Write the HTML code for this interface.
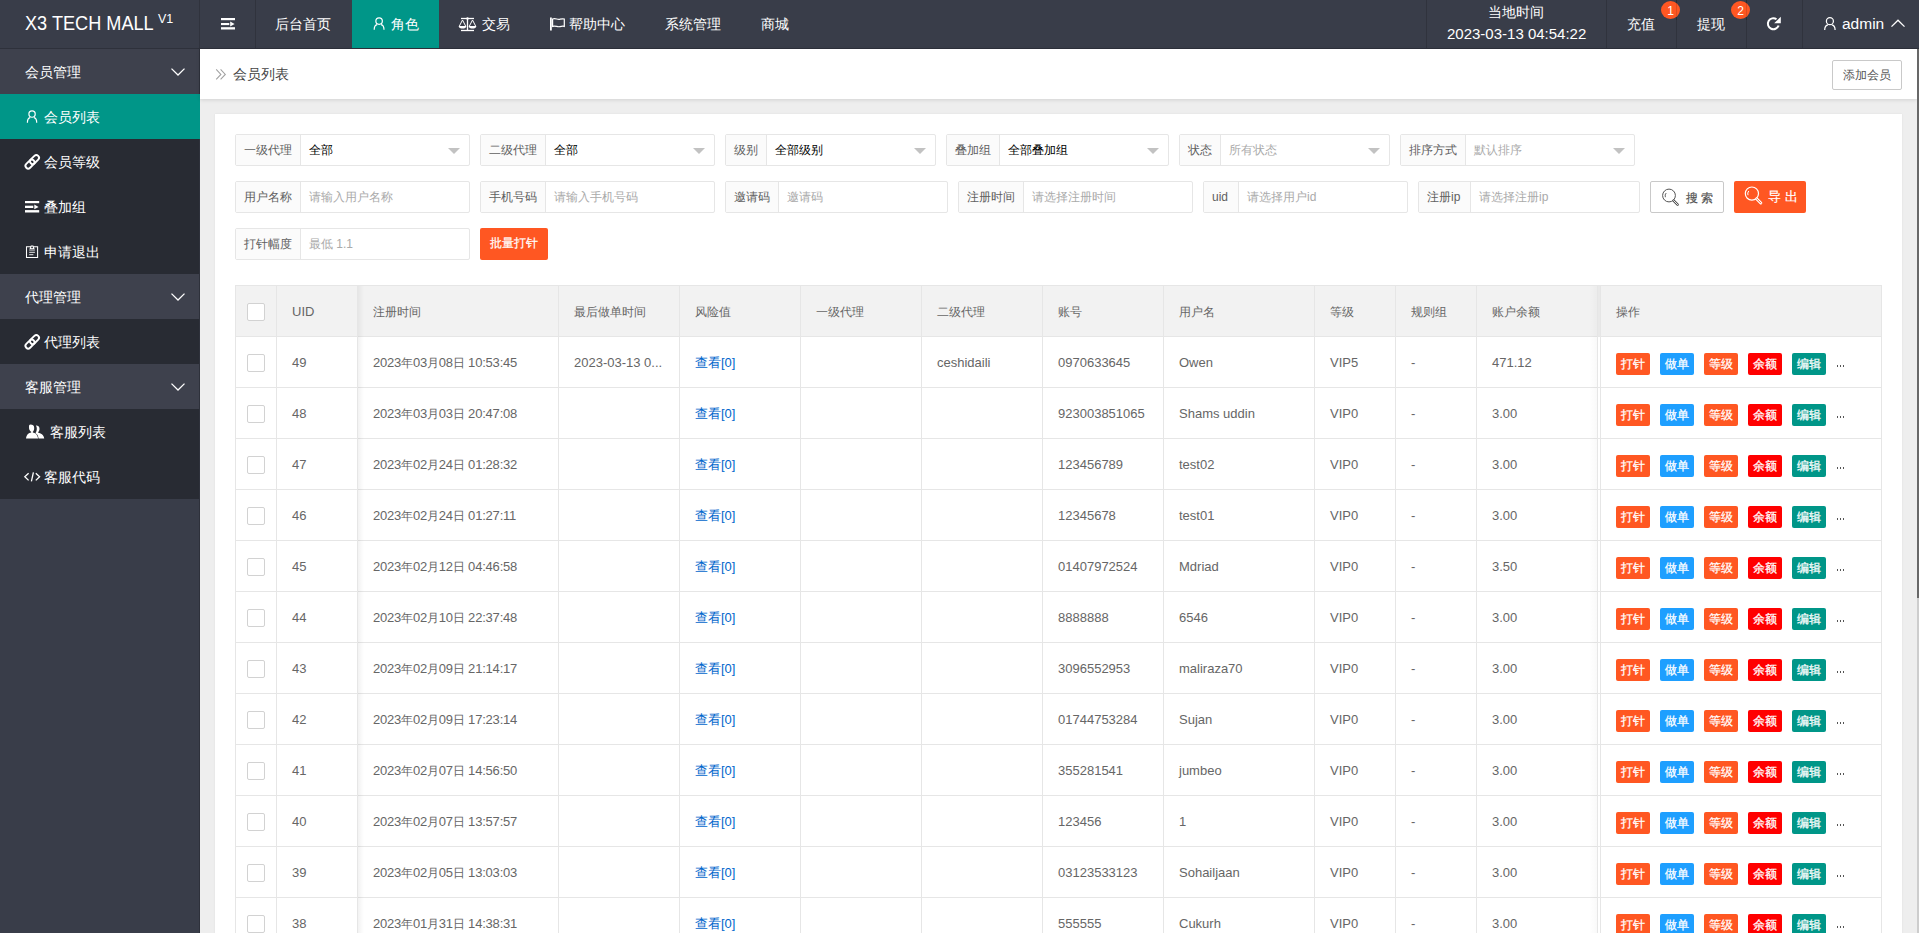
<!DOCTYPE html>
<html><head><meta charset="utf-8">
<style>
*{margin:0;padding:0;box-sizing:border-box}
html,body{width:1919px;height:933px;overflow:hidden;background:#EEEEEE;font-family:"Liberation Sans",sans-serif;color:#666}
.a{position:absolute;white-space:nowrap}
#hdr{position:absolute;left:0;top:0;width:1919px;height:49px;background:#393D49;border-bottom:1px solid #2E313B}
.vs{position:absolute;top:0;width:1px;height:48px;background:#30333D}
.nt{position:absolute;top:14px;font-size:14px;color:#fff;line-height:20px;white-space:nowrap}
#side{position:absolute;left:0;top:49px;width:200px;height:884px;background:#393D49;border-right:1px solid #2E313B}
.grp{position:absolute;left:0;width:199px;height:45px;background:#3E414D}
.itm{position:absolute;left:0;width:199px;height:45px;background:#282B33}
.st{position:absolute;top:13px;font-size:14px;color:#fff;line-height:20px;white-space:nowrap}
.ic{position:absolute;overflow:visible}
#crumb{position:absolute;left:200px;top:49px;width:1717px;height:50px;background:#fff;box-shadow:0 1px 4px rgba(0,0,0,.12)}
#card{position:absolute;left:215px;top:114px;width:1687px;height:840px;background:#fff;box-shadow:0 0 2px rgba(0,0,0,.07)}
#sb{position:absolute;left:1917px;top:49px;width:2px;height:884px;background:#cdcdcd}
#thumb{position:absolute;left:1917px;top:49px;width:2px;height:549px;background:#686868}
.ig{position:absolute;height:32px;border:1px solid #E6E6E6;border-radius:2px;background:#fff}
.ig .lb{position:absolute;left:0;top:0;height:30px;background:#FBFBFB;border-right:1px solid #E6E6E6;font-size:12px;color:#606060;line-height:31px;padding-left:8px;white-space:nowrap}
.ig .vv{position:absolute;top:0;font-size:12px;line-height:31px;white-space:nowrap;color:#000}
.ig .ph{position:absolute;top:0;font-size:12px;line-height:31px;white-space:nowrap;color:#AAA}
.ig .car{position:absolute;top:13px;width:0;height:0;border-left:6px solid transparent;border-right:6px solid transparent;border-top:6px solid #C2C2C2}
.btn{position:absolute;height:32px;border-radius:2px;font-size:12px;line-height:32px;text-align:center;white-space:nowrap;-webkit-text-stroke:0.2px currentColor}
.hl{position:absolute;left:235px;width:1647px;height:1px;background:#E6E6E6}
.vl{position:absolute;top:285px;width:1px;height:700px;background:#E6E6E6}
.th{position:absolute;top:302px;font-size:13px;line-height:20px;color:#666;white-space:nowrap}
.td{position:absolute;font-size:13px;line-height:20px;color:#666;white-space:nowrap}
.lk{color:#0066CC}
.cb{position:absolute;width:18px;height:18px;border:1px solid #D2D2D2;border-radius:2px;background:#fff}
.bt{position:absolute;width:34px;height:22px;border-radius:2px;color:#fff;font-size:12px;line-height:22px;text-align:center;-webkit-text-stroke:0.25px #fff}
.dots{position:absolute;width:9px;height:2px;background:radial-gradient(circle,#555 0.6px,transparent 0.9px) 0 0/3px 2px}
.cj{font-size:12px}

</style></head><body>
<div id="hdr">
  <div class="a" style="left:25px;top:11px;font-size:19.5px;color:#fff;line-height:24px;transform:scaleX(0.93);transform-origin:0 0">X3 TECH MALL</div><div class="a" style="left:158px;top:12px;font-size:12.5px;color:#fff;line-height:14px">V1</div>
  <div class="vs" style="left:199px"></div>
  <svg class="ic" style="left:221px;top:17px" width="15" height="13" viewBox="0 0 15 13"><rect x="0" y="1" width="14" height="2.2" fill="#fff"/><rect x="0" y="6" width="8.3" height="2.1" fill="#fff"/><path d="M9.2 4.6 L13.6 7 L9.2 9.4Z" fill="#fff"/><rect x="0" y="10.2" width="14" height="2.3" fill="#fff"/></svg>
  <div class="vs" style="left:255px"></div>
  <div style="position:absolute;left:352px;top:0;width:87px;height:48px;background:#009688"></div>
  <div class="nt" style="left:275px">后台首页</div>
  <svg class="ic" style="left:369px;top:13px" width="20" height="20" viewBox="369 13 20 20"><circle cx="379.1" cy="21.1" r="3.25" fill="none" stroke="#fff" stroke-width="1.2"/><path d="M374.20000000000005 29.700000000000003 C374.20000000000005 26.6 375.5 25.0 377.20000000000005 24.700000000000003" fill="none" stroke="#fff" stroke-width="1.2"/><path d="M384.0 29.700000000000003 C384.0 26.6 382.70000000000005 25.0 381.0 24.700000000000003" fill="none" stroke="#fff" stroke-width="1.2"/></svg>
  <div class="nt" style="left:391px">角色</div>
  <svg class="ic" style="left:457px;top:16px" width="22" height="16" viewBox="0 0 22 16"><path d="M4 2.5 H17" stroke="#fff" stroke-width="1.3"/><circle cx="10.5" cy="2.5" r="1.2" fill="#fff"/><path d="M10.5 2.5 V14.5" stroke="#fff" stroke-width="1.3"/><path d="M4 14.5 H17" stroke="#fff" stroke-width="1.3"/><path d="M5.5 4 L2.4 10 M5.5 4 L8.6 10" stroke="#fff" stroke-width="1"/><path d="M1.6 10 H9.4 C9.2 12 7.5 12.6 5.5 12.6 C3.5 12.6 1.8 12 1.6 10Z" fill="#fff"/><path d="M15.5 4 L12.4 10 M15.5 4 L18.6 10" stroke="#fff" stroke-width="1"/><path d="M11.6 10 H19.4 C19.2 12 17.5 12.6 15.5 12.6 C13.5 12.6 11.8 12 11.6 10Z" fill="#fff"/></svg>
  <div class="nt" style="left:482px">交易</div>
  <svg class="ic" style="left:549px;top:17px" width="17" height="14" viewBox="0 0 17 14"><rect x="1" y="0.5" width="1.8" height="13" fill="#fff"/><path d="M3.6 2 C6.5 0.8 8.5 3 11 2.2 C12.5 1.8 14 1.6 15.3 2 V9.4 C14 9 12.5 9.2 11 9.6 C8.5 10.4 6.5 8.2 3.6 9.4Z" fill="none" stroke="#fff" stroke-width="1.2"/></svg>
  <div class="nt" style="left:569px">帮助中心</div>
  <div class="nt" style="left:665px">系统管理</div>
  <div class="nt" style="left:761px">商城</div>
  <div class="vs" style="left:1426px"></div>
  <div class="a" style="left:1488px;top:2px;font-size:14px;color:#fff;line-height:20px">当地时间</div>
  <div class="a" style="left:1447px;top:24px;font-size:15px;color:#fff;line-height:20px">2023-03-13 04:54:22</div>
  <div class="vs" style="left:1606px"></div>
  <div class="nt" style="left:1627px">充值</div>
  <div class="vs" style="left:1676px"></div>
  <div class="a" style="left:1661px;top:1px;width:19px;height:18px;border-radius:50%;background:#FF5722;color:#fff;font-size:12px;line-height:20px;text-align:center">1</div><div class="a" style="left:1676px;top:0;width:1px;height:20px;background:rgba(0,0,0,.12)"></div>
  <div class="nt" style="left:1697px">提现</div>
  <div class="vs" style="left:1746px"></div>
  <div class="a" style="left:1731px;top:1px;width:19px;height:18px;border-radius:50%;background:#FF5722;color:#fff;font-size:12px;line-height:20px;text-align:center">2</div><div class="a" style="left:1746px;top:0;width:1px;height:20px;background:rgba(0,0,0,.12)"></div>
  <svg class="ic" style="left:1766px;top:16px" width="16" height="16" viewBox="0 0 16 16"><path d="M12.6 9.5 A5.5 5.5 0 1 1 10.5 3.2" fill="none" stroke="#fff" stroke-width="2"/><path d="M8.2 7.2 L14.8 7.2 L14.8 0.8Z" fill="#fff"/></svg>
  <div class="vs" style="left:1802px"></div>
  <svg class="ic" style="left:1819px;top:13px" width="20" height="20" viewBox="1819 13 20 20"><circle cx="1829.9" cy="21.2" r="3.5" fill="none" stroke="#fff" stroke-width="1.25"/><path d="M1824.7 30.0 C1824.7 26.7 1826.3000000000002 25.099999999999998 1828.0 24.8" fill="none" stroke="#fff" stroke-width="1.25"/><path d="M1835.1000000000001 30.0 C1835.1000000000001 26.7 1833.5 25.099999999999998 1831.8000000000002 24.8" fill="none" stroke="#fff" stroke-width="1.25"/></svg>
  <div class="a" style="left:1842px;top:14px;font-size:15.5px;color:#fff;line-height:20px">admin</div>
  <svg class="ic" style="left:1890px;top:18px" width="16" height="10" viewBox="0 0 16 10"><path d="M1.5 8.6 L8 2.2 L14.5 8.6" fill="none" stroke="#fff" stroke-width="1.3"/></svg>
</div>
<div id="side">
  <div class="grp" style="top:0"><span class="st" style="left:25px">会员管理</span><svg class="ic" style="left:170px;top:18px" width="16" height="10" viewBox="0 0 16 10"><path d="M1.5 1.6 L8 8 L14.5 1.6" fill="none" stroke="#fff" stroke-width="1.3"/></svg></div>
  <div class="itm" style="top:45px;width:200px;background:#009688"><svg class="ic" style="left:22px;top:12px" width="20" height="20" viewBox="22 106 20 20"><circle cx="32.06" cy="114.1" r="3.15" fill="none" stroke="#fff" stroke-width="1.2"/><path d="M27.410000000000004 122.69999999999999 C27.410000000000004 119.6 28.46 118.0 30.160000000000004 117.69999999999999" fill="none" stroke="#fff" stroke-width="1.2"/><path d="M36.71 122.69999999999999 C36.71 119.6 35.660000000000004 118.0 33.96 117.69999999999999" fill="none" stroke="#fff" stroke-width="1.2"/></svg><span class="st" style="left:44px">会员列表</span></div>
  <div class="itm" style="top:90px"><svg class="ic" style="left:20px;top:0px" width="25" height="45" viewBox="0 0 25 45"><rect x="4.75" y="22.35" width="10.5" height="5.4" rx="2.7" transform="rotate(-45 10 25.05)" fill="none" stroke="#fff" stroke-width="1.9"/><rect x="9.25" y="17.85" width="10.5" height="5.4" rx="2.7" transform="rotate(-45 14.5 20.55)" fill="none" stroke="#fff" stroke-width="1.9"/></svg><span class="st" style="left:44px">会员等级</span></div>
  <div class="itm" style="top:135px"><svg class="ic" style="left:25px;top:16px" width="15" height="13" viewBox="0 0 15 13"><rect x="0" y="1" width="14.2" height="2.2" fill="#fff"/><rect x="0" y="5.7" width="8.3" height="2.3" fill="#fff"/><path d="M9.3 4.5 L13.6 6.9 L9.3 9.3Z" fill="#fff"/><rect x="0" y="10.1" width="14.2" height="2.4" fill="#fff"/></svg><span class="st" style="left:44px">叠加组</span></div>
  <div class="itm" style="top:180px"><svg class="ic" style="left:20px;top:11px" width="25" height="25" viewBox="20 240 25 25"><path d="M26.5 246.7 H37.6 V257.5 H26.5Z" fill="none" stroke="#fff" stroke-width="1.05"/><path d="M29.5 248.9 L30.8 245.6 H33.3 L34.6 248.9Z" fill="#fff"/><circle cx="32.05" cy="247.4" r="0.9" fill="#282B33"/><path d="M29.2 250 H34.9 M29.2 252.3 H34.9 M29.2 254.7 H33.4" stroke="#fff" stroke-width="0.9"/></svg><span class="st" style="left:44px">申请退出</span></div>
  <div class="grp" style="top:225px"><span class="st" style="left:25px">代理管理</span><svg class="ic" style="left:170px;top:18px" width="16" height="10" viewBox="0 0 16 10"><path d="M1.5 1.6 L8 8 L14.5 1.6" fill="none" stroke="#fff" stroke-width="1.3"/></svg></div>
  <div class="itm" style="top:270px"><svg class="ic" style="left:20px;top:0px" width="25" height="45" viewBox="0 0 25 45"><rect x="4.75" y="22.35" width="10.5" height="5.4" rx="2.7" transform="rotate(-45 10 25.05)" fill="none" stroke="#fff" stroke-width="1.9"/><rect x="9.25" y="17.85" width="10.5" height="5.4" rx="2.7" transform="rotate(-45 14.5 20.55)" fill="none" stroke="#fff" stroke-width="1.9"/></svg><span class="st" style="left:44px">代理列表</span></div>
  <div class="grp" style="top:315px"><span class="st" style="left:25px">客服管理</span><svg class="ic" style="left:170px;top:18px" width="16" height="10" viewBox="0 0 16 10"><path d="M1.5 1.6 L8 8 L14.5 1.6" fill="none" stroke="#fff" stroke-width="1.3"/></svg></div>
  <div class="itm" style="top:360px"><svg class="ic" style="left:25px;top:15px" width="20" height="16" viewBox="0 0 20 16"><path d="M5 0.6 C7 0.6 8.6 1.6 8.6 4 C8.6 6 8 7 7.2 7.8 L7.2 8.4 C9.5 9 12 10 12.5 14.6 H0.4 C0.8 10 3.3 9 5.6 8.4 L5.6 7.8 C4.6 7 3.4 6 3.4 4 C3.4 1.6 3.4 0.6 5 0.6Z" fill="#fff" transform="translate(0.6 0)"/><path d="M11.2 1.6 C13 1.6 14.5 2.6 14.5 4.8 C14.5 6.6 13.9 7.5 13.2 8.2 L13.2 8.8 C15.6 9.4 18.7 10.4 19.2 14.6 H13.6 C13.4 11.6 12 10 10.4 9.2 C11.2 8 11.8 6.8 11.8 4.8 C11.8 3.4 11.6 2.4 10.8 1.7Z" fill="#fff"/></svg><span class="st" style="left:50px">客服列表</span></div>
  <div class="itm" style="top:405px"><svg class="ic" style="left:24px;top:17px" width="17" height="13" viewBox="0 -0.6 17 13"><path d="M4.6 1.6 L0.8 5.2 L4.6 8.8" fill="none" stroke="#fff" stroke-width="1.3"/><path d="M7.4 9.8 L9.4 0.8" stroke="#fff" stroke-width="1.3"/><path d="M11.8 1.6 L15.6 5.2 L11.8 8.8" fill="none" stroke="#fff" stroke-width="1.3"/></svg><span class="st" style="left:44px">客服代码</span></div>
</div>
<div id="crumb">
  <svg class="ic" style="left:15px;top:20px" width="12" height="12" viewBox="0 0 12 12"><path d="M1.2 0.4 L5.9 5.4 L1.2 10.4 M5.6 0.4 L10.3 5.4 L5.6 10.4" fill="none" stroke="#A0A0A0" stroke-width="1.05"/></svg>
  <div class="a" style="left:33px;top:15px;font-size:14px;color:#444;line-height:20px">会员列表</div>
  <div class="a" style="left:1632px;top:11px;width:70px;height:30px;border:1px solid #C9C9C9;border-radius:2px;font-size:12px;line-height:28px;text-align:center;color:#555">添加会员</div>
</div>
<div id="card"></div>
<!-- filters row1 -->
<div class="ig" style="left:235px;top:134px;width:235px"><div class="lb" style="width:65px">一级代理</div><div class="vv" style="left:73px">全部</div><div class="car" style="left:212px"></div></div>
<div class="ig" style="left:480px;top:134px;width:235px"><div class="lb" style="width:65px">二级代理</div><div class="vv" style="left:73px">全部</div><div class="car" style="left:212px"></div></div>
<div class="ig" style="left:725px;top:134px;width:211px"><div class="lb" style="width:41px">级别</div><div class="vv" style="left:49px">全部级别</div><div class="car" style="left:188px"></div></div>
<div class="ig" style="left:946px;top:134px;width:223px"><div class="lb" style="width:53px">叠加组</div><div class="vv" style="left:61px">全部叠加组</div><div class="car" style="left:200px"></div></div>
<div class="ig" style="left:1179px;top:134px;width:211px"><div class="lb" style="width:41px">状态</div><div class="ph" style="left:49px">所有状态</div><div class="car" style="left:188px"></div></div>
<div class="ig" style="left:1400px;top:134px;width:235px"><div class="lb" style="width:65px">排序方式</div><div class="ph" style="left:73px">默认排序</div><div class="car" style="left:212px"></div></div>
<!-- row2 -->
<div class="ig" style="left:235px;top:181px;width:235px"><div class="lb" style="width:65px">用户名称</div><div class="ph" style="left:73px">请输入用户名称</div></div>
<div class="ig" style="left:480px;top:181px;width:235px"><div class="lb" style="width:65px">手机号码</div><div class="ph" style="left:73px">请输入手机号码</div></div>
<div class="ig" style="left:725px;top:181px;width:223px"><div class="lb" style="width:53px">邀请码</div><div class="ph" style="left:61px">邀请码</div></div>
<div class="ig" style="left:958px;top:181px;width:235px"><div class="lb" style="width:65px">注册时间</div><div class="ph" style="left:73px">请选择注册时间</div></div>
<div class="ig" style="left:1203px;top:181px;width:205px"><div class="lb" style="width:35px">uid</div><div class="ph" style="left:43px">请选择用户id</div></div>
<div class="ig" style="left:1418px;top:181px;width:222px"><div class="lb" style="width:52px">注册ip</div><div class="ph" style="left:60px">请选择注册ip</div></div>
<div class="btn" style="left:1650px;top:181px;width:74px;border:1px solid #C9C9C9;background:#fff;color:#555;line-height:30px"><svg class="ic" style="left:-1px;top:-1px" width="40" height="32" viewBox="1650 181 40 32"><circle cx="1669" cy="195.5" r="6.4" fill="none" stroke="#555" stroke-width="1"/><path d="M1665.4 197.2 A4 4 0 0 1 1666.2 193" fill="none" stroke="#555" stroke-width="0.9"/><path d="M1673.6 200.6 L1677.6 204.6" stroke="#555" stroke-width="2.6" stroke-linecap="round"/><path d="M1673.6 200.6 L1677.6 204.6" stroke="#fff" stroke-width="0.9" stroke-linecap="round"/></svg><span style="position:absolute;left:35px;top:1px">搜 索</span></div>
<div class="btn" style="left:1734px;top:181px;width:72px;background:#FF5722;color:#fff"><svg class="ic" style="left:0;top:0" width="40" height="32" viewBox="1734 181 40 32"><circle cx="1751.9" cy="193.6" r="6.6" fill="none" stroke="#fff" stroke-width="1.2"/><path d="M1748 195.2 A4 4 0 0 1 1748.8 191" fill="none" stroke="#fff" stroke-width="1"/><path d="M1756.6 198.8 L1760.8 203" stroke="#fff" stroke-width="3" stroke-linecap="round"/><path d="M1756.6 198.8 L1760.8 203" stroke="#FF5722" stroke-width="1" stroke-linecap="round"/></svg><span style="position:absolute;left:34px;top:0;font-size:13px">导 出</span></div>
<!-- row3 -->
<div class="ig" style="left:235px;top:228px;width:235px"><div class="lb" style="width:65px">打针幅度</div><div class="ph" style="left:73px">最低 1.1</div></div>
<div class="btn" style="left:480px;top:228px;width:68px;background:#FF5722;color:#fff;line-height:30px">批量打针</div>

<div id="tbl">
<div class="a" style="left:236px;top:286px;width:1645px;height:50px;background:#F2F2F2"></div>
<div class="hl" style="top:285px"></div>
<div class="hl" style="top:336px"></div>
<div class="hl" style="top:387px"></div>
<div class="hl" style="top:438px"></div>
<div class="hl" style="top:489px"></div>
<div class="hl" style="top:540px"></div>
<div class="hl" style="top:591px"></div>
<div class="hl" style="top:642px"></div>
<div class="hl" style="top:693px"></div>
<div class="hl" style="top:744px"></div>
<div class="hl" style="top:795px"></div>
<div class="hl" style="top:846px"></div>
<div class="hl" style="top:897px"></div>
<div class="hl" style="top:948px"></div>
<div class="vl" style="left:235px"></div>
<div class="vl" style="left:276px"></div>
<div class="vl" style="left:357px"></div>
<div class="vl" style="left:558px"></div>
<div class="vl" style="left:679px"></div>
<div class="vl" style="left:800px"></div>
<div class="vl" style="left:921px"></div>
<div class="vl" style="left:1042px"></div>
<div class="vl" style="left:1163px"></div>
<div class="vl" style="left:1314px"></div>
<div class="vl" style="left:1395px"></div>
<div class="vl" style="left:1476px"></div>
<div class="vl" style="left:1597px"></div>
<div class="vl" style="left:1600px"></div>
<div class="vl" style="left:1881px"></div>
<div class="a" style="left:358px;top:286px;width:6px;height:700px;background:linear-gradient(90deg,rgba(0,0,0,.05),rgba(0,0,0,0))"></div>
<div class="a" style="left:1598px;top:286px;width:2px;height:50px;background:#E9E9E9"></div>
<div class="a" style="left:1589px;top:286px;width:8px;height:700px;background:linear-gradient(90deg,rgba(0,0,0,0),rgba(0,0,0,.025))"></div>
<div class="th" style="left:292px;font-size:13px">UID</div>
<div class="th" style="left:373px;font-size:12px">注册时间</div>
<div class="th" style="left:574px;font-size:12px">最后做单时间</div>
<div class="th" style="left:695px;font-size:12px">风险值</div>
<div class="th" style="left:816px;font-size:12px">一级代理</div>
<div class="th" style="left:937px;font-size:12px">二级代理</div>
<div class="th" style="left:1058px;font-size:12px">账号</div>
<div class="th" style="left:1179px;font-size:12px">用户名</div>
<div class="th" style="left:1330px;font-size:12px">等级</div>
<div class="th" style="left:1411px;font-size:12px">规则组</div>
<div class="th" style="left:1492px;font-size:12px">账户余额</div>
<div class="th" style="left:1616px;font-size:12px">操作</div>
<div class="cb" style="left:247px;top:303px"></div>
<div class="cb" style="left:247px;top:354px"></div>
<div class="td" style="left:292px;top:353px">49</div>
<div class="td" style="left:373px;top:353px;letter-spacing:-0.2px">2023<span class="cj">年</span>03<span class="cj">月</span>08<span class="cj">日</span> 10:53:45</div>
<div class="td" style="left:574px;top:353px">2023-03-13 0...</div>
<div class="td" style="left:937px;top:353px">ceshidaili</div>
<div class="td" style="left:1058px;top:353px">0970633645</div>
<div class="td" style="left:1179px;top:353px">Owen</div>
<div class="td" style="left:1330px;top:353px">VIP5</div>
<div class="td" style="left:1411px;top:353px">-</div>
<div class="td" style="left:1492px;top:353px">471.12</div>
<div class="td lk" style="left:695px;top:353px">查看[0]</div>
<div class="bt" style="left:1616px;top:353px;background:#FF5722">打针</div>
<div class="bt" style="left:1660px;top:353px;background:#1E9FFF">做单</div>
<div class="bt" style="left:1704px;top:353px;background:#FF5722">等级</div>
<div class="bt" style="left:1748px;top:353px;background:#FF0000">余额</div>
<div class="bt" style="left:1792px;top:353px;background:#009688">编辑</div>
<div class="dots" style="left:1836px;top:365px"></div>
<div class="cb" style="left:247px;top:405px"></div>
<div class="td" style="left:292px;top:404px">48</div>
<div class="td" style="left:373px;top:404px;letter-spacing:-0.2px">2023<span class="cj">年</span>03<span class="cj">月</span>03<span class="cj">日</span> 20:47:08</div>
<div class="td" style="left:1058px;top:404px">923003851065</div>
<div class="td" style="left:1179px;top:404px">Shams uddin</div>
<div class="td" style="left:1330px;top:404px">VIP0</div>
<div class="td" style="left:1411px;top:404px">-</div>
<div class="td" style="left:1492px;top:404px">3.00</div>
<div class="td lk" style="left:695px;top:404px">查看[0]</div>
<div class="bt" style="left:1616px;top:404px;background:#FF5722">打针</div>
<div class="bt" style="left:1660px;top:404px;background:#1E9FFF">做单</div>
<div class="bt" style="left:1704px;top:404px;background:#FF5722">等级</div>
<div class="bt" style="left:1748px;top:404px;background:#FF0000">余额</div>
<div class="bt" style="left:1792px;top:404px;background:#009688">编辑</div>
<div class="dots" style="left:1836px;top:416px"></div>
<div class="cb" style="left:247px;top:456px"></div>
<div class="td" style="left:292px;top:455px">47</div>
<div class="td" style="left:373px;top:455px;letter-spacing:-0.2px">2023<span class="cj">年</span>02<span class="cj">月</span>24<span class="cj">日</span> 01:28:32</div>
<div class="td" style="left:1058px;top:455px">123456789</div>
<div class="td" style="left:1179px;top:455px">test02</div>
<div class="td" style="left:1330px;top:455px">VIP0</div>
<div class="td" style="left:1411px;top:455px">-</div>
<div class="td" style="left:1492px;top:455px">3.00</div>
<div class="td lk" style="left:695px;top:455px">查看[0]</div>
<div class="bt" style="left:1616px;top:455px;background:#FF5722">打针</div>
<div class="bt" style="left:1660px;top:455px;background:#1E9FFF">做单</div>
<div class="bt" style="left:1704px;top:455px;background:#FF5722">等级</div>
<div class="bt" style="left:1748px;top:455px;background:#FF0000">余额</div>
<div class="bt" style="left:1792px;top:455px;background:#009688">编辑</div>
<div class="dots" style="left:1836px;top:467px"></div>
<div class="cb" style="left:247px;top:507px"></div>
<div class="td" style="left:292px;top:506px">46</div>
<div class="td" style="left:373px;top:506px;letter-spacing:-0.2px">2023<span class="cj">年</span>02<span class="cj">月</span>24<span class="cj">日</span> 01:27:11</div>
<div class="td" style="left:1058px;top:506px">12345678</div>
<div class="td" style="left:1179px;top:506px">test01</div>
<div class="td" style="left:1330px;top:506px">VIP0</div>
<div class="td" style="left:1411px;top:506px">-</div>
<div class="td" style="left:1492px;top:506px">3.00</div>
<div class="td lk" style="left:695px;top:506px">查看[0]</div>
<div class="bt" style="left:1616px;top:506px;background:#FF5722">打针</div>
<div class="bt" style="left:1660px;top:506px;background:#1E9FFF">做单</div>
<div class="bt" style="left:1704px;top:506px;background:#FF5722">等级</div>
<div class="bt" style="left:1748px;top:506px;background:#FF0000">余额</div>
<div class="bt" style="left:1792px;top:506px;background:#009688">编辑</div>
<div class="dots" style="left:1836px;top:518px"></div>
<div class="cb" style="left:247px;top:558px"></div>
<div class="td" style="left:292px;top:557px">45</div>
<div class="td" style="left:373px;top:557px;letter-spacing:-0.2px">2023<span class="cj">年</span>02<span class="cj">月</span>12<span class="cj">日</span> 04:46:58</div>
<div class="td" style="left:1058px;top:557px">01407972524</div>
<div class="td" style="left:1179px;top:557px">Mdriad</div>
<div class="td" style="left:1330px;top:557px">VIP0</div>
<div class="td" style="left:1411px;top:557px">-</div>
<div class="td" style="left:1492px;top:557px">3.50</div>
<div class="td lk" style="left:695px;top:557px">查看[0]</div>
<div class="bt" style="left:1616px;top:557px;background:#FF5722">打针</div>
<div class="bt" style="left:1660px;top:557px;background:#1E9FFF">做单</div>
<div class="bt" style="left:1704px;top:557px;background:#FF5722">等级</div>
<div class="bt" style="left:1748px;top:557px;background:#FF0000">余额</div>
<div class="bt" style="left:1792px;top:557px;background:#009688">编辑</div>
<div class="dots" style="left:1836px;top:569px"></div>
<div class="cb" style="left:247px;top:609px"></div>
<div class="td" style="left:292px;top:608px">44</div>
<div class="td" style="left:373px;top:608px;letter-spacing:-0.2px">2023<span class="cj">年</span>02<span class="cj">月</span>10<span class="cj">日</span> 22:37:48</div>
<div class="td" style="left:1058px;top:608px">8888888</div>
<div class="td" style="left:1179px;top:608px">6546</div>
<div class="td" style="left:1330px;top:608px">VIP0</div>
<div class="td" style="left:1411px;top:608px">-</div>
<div class="td" style="left:1492px;top:608px">3.00</div>
<div class="td lk" style="left:695px;top:608px">查看[0]</div>
<div class="bt" style="left:1616px;top:608px;background:#FF5722">打针</div>
<div class="bt" style="left:1660px;top:608px;background:#1E9FFF">做单</div>
<div class="bt" style="left:1704px;top:608px;background:#FF5722">等级</div>
<div class="bt" style="left:1748px;top:608px;background:#FF0000">余额</div>
<div class="bt" style="left:1792px;top:608px;background:#009688">编辑</div>
<div class="dots" style="left:1836px;top:620px"></div>
<div class="cb" style="left:247px;top:660px"></div>
<div class="td" style="left:292px;top:659px">43</div>
<div class="td" style="left:373px;top:659px;letter-spacing:-0.2px">2023<span class="cj">年</span>02<span class="cj">月</span>09<span class="cj">日</span> 21:14:17</div>
<div class="td" style="left:1058px;top:659px">3096552953</div>
<div class="td" style="left:1179px;top:659px">maliraza70</div>
<div class="td" style="left:1330px;top:659px">VIP0</div>
<div class="td" style="left:1411px;top:659px">-</div>
<div class="td" style="left:1492px;top:659px">3.00</div>
<div class="td lk" style="left:695px;top:659px">查看[0]</div>
<div class="bt" style="left:1616px;top:659px;background:#FF5722">打针</div>
<div class="bt" style="left:1660px;top:659px;background:#1E9FFF">做单</div>
<div class="bt" style="left:1704px;top:659px;background:#FF5722">等级</div>
<div class="bt" style="left:1748px;top:659px;background:#FF0000">余额</div>
<div class="bt" style="left:1792px;top:659px;background:#009688">编辑</div>
<div class="dots" style="left:1836px;top:671px"></div>
<div class="cb" style="left:247px;top:711px"></div>
<div class="td" style="left:292px;top:710px">42</div>
<div class="td" style="left:373px;top:710px;letter-spacing:-0.2px">2023<span class="cj">年</span>02<span class="cj">月</span>09<span class="cj">日</span> 17:23:14</div>
<div class="td" style="left:1058px;top:710px">01744753284</div>
<div class="td" style="left:1179px;top:710px">Sujan</div>
<div class="td" style="left:1330px;top:710px">VIP0</div>
<div class="td" style="left:1411px;top:710px">-</div>
<div class="td" style="left:1492px;top:710px">3.00</div>
<div class="td lk" style="left:695px;top:710px">查看[0]</div>
<div class="bt" style="left:1616px;top:710px;background:#FF5722">打针</div>
<div class="bt" style="left:1660px;top:710px;background:#1E9FFF">做单</div>
<div class="bt" style="left:1704px;top:710px;background:#FF5722">等级</div>
<div class="bt" style="left:1748px;top:710px;background:#FF0000">余额</div>
<div class="bt" style="left:1792px;top:710px;background:#009688">编辑</div>
<div class="dots" style="left:1836px;top:722px"></div>
<div class="cb" style="left:247px;top:762px"></div>
<div class="td" style="left:292px;top:761px">41</div>
<div class="td" style="left:373px;top:761px;letter-spacing:-0.2px">2023<span class="cj">年</span>02<span class="cj">月</span>07<span class="cj">日</span> 14:56:50</div>
<div class="td" style="left:1058px;top:761px">355281541</div>
<div class="td" style="left:1179px;top:761px">jumbeo</div>
<div class="td" style="left:1330px;top:761px">VIP0</div>
<div class="td" style="left:1411px;top:761px">-</div>
<div class="td" style="left:1492px;top:761px">3.00</div>
<div class="td lk" style="left:695px;top:761px">查看[0]</div>
<div class="bt" style="left:1616px;top:761px;background:#FF5722">打针</div>
<div class="bt" style="left:1660px;top:761px;background:#1E9FFF">做单</div>
<div class="bt" style="left:1704px;top:761px;background:#FF5722">等级</div>
<div class="bt" style="left:1748px;top:761px;background:#FF0000">余额</div>
<div class="bt" style="left:1792px;top:761px;background:#009688">编辑</div>
<div class="dots" style="left:1836px;top:773px"></div>
<div class="cb" style="left:247px;top:813px"></div>
<div class="td" style="left:292px;top:812px">40</div>
<div class="td" style="left:373px;top:812px;letter-spacing:-0.2px">2023<span class="cj">年</span>02<span class="cj">月</span>07<span class="cj">日</span> 13:57:57</div>
<div class="td" style="left:1058px;top:812px">123456</div>
<div class="td" style="left:1179px;top:812px">1</div>
<div class="td" style="left:1330px;top:812px">VIP0</div>
<div class="td" style="left:1411px;top:812px">-</div>
<div class="td" style="left:1492px;top:812px">3.00</div>
<div class="td lk" style="left:695px;top:812px">查看[0]</div>
<div class="bt" style="left:1616px;top:812px;background:#FF5722">打针</div>
<div class="bt" style="left:1660px;top:812px;background:#1E9FFF">做单</div>
<div class="bt" style="left:1704px;top:812px;background:#FF5722">等级</div>
<div class="bt" style="left:1748px;top:812px;background:#FF0000">余额</div>
<div class="bt" style="left:1792px;top:812px;background:#009688">编辑</div>
<div class="dots" style="left:1836px;top:824px"></div>
<div class="cb" style="left:247px;top:864px"></div>
<div class="td" style="left:292px;top:863px">39</div>
<div class="td" style="left:373px;top:863px;letter-spacing:-0.2px">2023<span class="cj">年</span>02<span class="cj">月</span>05<span class="cj">日</span> 13:03:03</div>
<div class="td" style="left:1058px;top:863px">03123533123</div>
<div class="td" style="left:1179px;top:863px">Sohailjaan</div>
<div class="td" style="left:1330px;top:863px">VIP0</div>
<div class="td" style="left:1411px;top:863px">-</div>
<div class="td" style="left:1492px;top:863px">3.00</div>
<div class="td lk" style="left:695px;top:863px">查看[0]</div>
<div class="bt" style="left:1616px;top:863px;background:#FF5722">打针</div>
<div class="bt" style="left:1660px;top:863px;background:#1E9FFF">做单</div>
<div class="bt" style="left:1704px;top:863px;background:#FF5722">等级</div>
<div class="bt" style="left:1748px;top:863px;background:#FF0000">余额</div>
<div class="bt" style="left:1792px;top:863px;background:#009688">编辑</div>
<div class="dots" style="left:1836px;top:875px"></div>
<div class="cb" style="left:247px;top:915px"></div>
<div class="td" style="left:292px;top:914px">38</div>
<div class="td" style="left:373px;top:914px;letter-spacing:-0.2px">2023<span class="cj">年</span>01<span class="cj">月</span>31<span class="cj">日</span> 14:38:31</div>
<div class="td" style="left:1058px;top:914px">555555</div>
<div class="td" style="left:1179px;top:914px">Cukurh</div>
<div class="td" style="left:1330px;top:914px">VIP0</div>
<div class="td" style="left:1411px;top:914px">-</div>
<div class="td" style="left:1492px;top:914px">3.00</div>
<div class="td lk" style="left:695px;top:914px">查看[0]</div>
<div class="bt" style="left:1616px;top:914px;background:#FF5722">打针</div>
<div class="bt" style="left:1660px;top:914px;background:#1E9FFF">做单</div>
<div class="bt" style="left:1704px;top:914px;background:#FF5722">等级</div>
<div class="bt" style="left:1748px;top:914px;background:#FF0000">余额</div>
<div class="bt" style="left:1792px;top:914px;background:#009688">编辑</div>
<div class="dots" style="left:1836px;top:926px"></div>
</div>
<div id="sb"></div><div id="thumb"></div>
</body></html>
